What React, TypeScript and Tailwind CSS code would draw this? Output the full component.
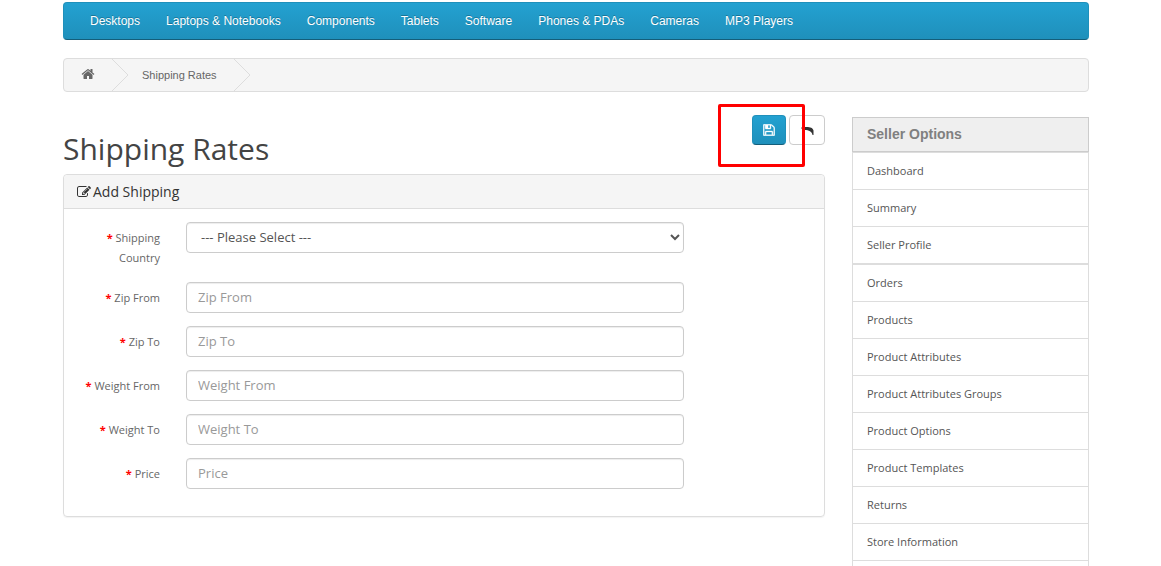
const MENU = [
  "Desktops",
  "Laptops & Notebooks",
  "Components",
  "Tablets",
  "Software",
  "Phones & PDAs",
  "Cameras",
  "MP3 Players",
];

const FIELDS = [
  { id: "zip-from", label: "Zip From" },
  { id: "zip-to", label: "Zip To" },
  { id: "weight-from", label: "Weight From" },
  { id: "weight-to", label: "Weight To" },
  { id: "price", label: "Price" },
];

const SELLER_LINKS = [
  ["Dashboard", "Summary", "Seller Profile"],
  [
    "Orders",
    "Products",
    "Product Attributes",
    "Product Attributes Groups",
    "Product Options",
    "Product Templates",
    "Returns",
    "Store Information",
  ],
];

const CONTROL =
  "block h-[31px] w-full rounded border border-[#ccc] bg-white pb-0.5 text-[13px] text-[#555] shadow-[inset_0_1px_1px_rgba(0,0,0,0.075)] outline-none focus:border-[#66afe9]";

/** House icon of the first breadcrumb entry. */
function HomeIcon() {
  return (
    <svg viewBox="0 0 1792 1792" className="size-[14px]" fill="currentColor" aria-hidden="true">
      <path d="M1472 992v480q0 26-19 45t-45 19h-384v-384h-256v384h-384q-26 0-45-19t-19-45v-480q0-1 .5-3t.5-3l575-474 575 474q1 2 1 6zm223-69l-62 74q-8 9-21 11h-3q-13 0-21-7l-692-577-692 577q-12 8-24 7-13-2-21-11l-62-74q-8-10-7-23.500t11-21.500l719-599q32-26 76-26t76 26l244 204v-195q0-14 9-23t23-9h192q14 0 23 9t9 23v408l219 182q10 8 11 21.500t-7 23.500z" />
    </svg>
  );
}

/** Pencil over a square, in the panel heading. */
function EditIcon() {
  return (
    <svg viewBox="0 0 1792 1792" className="size-[14px]" fill="currentColor" aria-hidden="true">
      <path d="M888 1184l116-116-152-152-116 116v56h96v96h56zm440-720q-16-16-33 1l-350 350q-17 17-1 33t33-1l350-350q17-17 1-33zm80 594v190q0 119-84.500 203.500t-203.500 84.500h-832q-119 0-203.500-84.500t-84.500-203.500v-832q0-119 84.500-203.500t203.500-84.500h832q63 0 117 25 15 7 18 23 3 17-9 29l-49 49q-14 14-32 8-23-6-45-6h-832q-66 0-113 47t-47 113v832q0 66 47 113t113 47h832q66 0 113-47t47-113v-126q0-13 9-22l64-64q15-15 35-7t20 29zm-96-738l288 288-672 672h-288v-288zm444 132l-92 92-288-288 92-92q28-28 68-28t68 28l152 152q28 28 28 68t-28 68z" />
    </svg>
  );
}

/** Floppy disk icon of the save button. */
function SaveIcon() {
  return (
    <svg
      viewBox="-30 -30 1596 1596"
      className="size-3"
      fill="currentColor"
      stroke="currentColor"
      strokeWidth="50"
      aria-hidden="true"
    >
      <path d="M384 1408h768v-384H384v384zm896 0h128V512q0-14-10-38.500t-20-34.500l-281-281q-10-10-34-20t-39-10v416q0 40-28 68t-68 28H352q-40 0-68-28t-28-68V128H128v1280h128V992q0-40 28-68t68-28h832q40 0 68 28t28 68v416zM896 480V160q0-13-9.500-22.500T864 128H672q-13 0-22.500 9.500T640 160v320q0 13 9.500 22.500T672 512h192q13 0 22.500-9.500T896 480zm640 32v928q0 40-28 68t-68 28H96q-40 0-68-28t-28-68V96q0-40 28-68T96 0h928q40 0 88 20t76 48l280 280q28 28 48 76t20 88z" />
    </svg>
  );
}

/** Curved arrow of the back button. */
function BackIcon() {
  return (
    <svg viewBox="0 0 14 12" className="h-3 w-3.5" fill="#333" aria-hidden="true">
      <path d="M1 4 4.500 1.500V3C9 2.500 13 3.500 13.500 6.500V11H12.500C12 7.500 9 6 4.500 6v1z" />
    </svg>
  );
}

/** Chevron line between two breadcrumb entries. */
function Separator() {
  return (
    <svg viewBox="0 0 17 32" className="h-8 w-[17px]" fill="none" stroke="#ddd" aria-hidden="true">
      <path d="M0 0 16 16 0 32" />
    </svg>
  );
}

function RequiredLabel({ htmlFor, text }: { htmlFor: string; text: string }) {
  return (
    <label
      htmlFor={htmlFor}
      className="w-24 shrink-0 pt-1.5 text-right text-[11px] leading-5 text-[#666]"
    >
      <span className="font-bold text-[#f00]">* </span>
      {text}
    </label>
  );
}

export default function App() {
  return (
    <div className="h-screen overflow-hidden bg-white pt-0.5 pr-[72px] pl-[63px] font-['Open_Sans',sans-serif] text-[#666]">
      <nav className="rounded border border-[#1f90bb] border-b-[#145e7a] bg-linear-to-b from-[#23a1d1] to-[#1f90bb] px-[13px] font-['Liberation_Sans',Arial,sans-serif]">
        <ul className="flex">
          {MENU.map((item) => (
            <li key={item}>
              <a
                href="#"
                className="block px-[13px] py-2 text-xs leading-5 text-white [text-shadow:0_-1px_0_rgba(0,0,0,0.25)]"
              >
                {item}
              </a>
            </li>
          ))}
        </ul>
      </nav>

      <ol className="mt-[18px] flex items-center rounded border border-[#ddd] bg-[#f5f5f5] font-['Liberation_Sans',Arial,sans-serif] text-[11px]">
        <li className="flex items-center">
          <a href="#" aria-label="Home" className="px-[17px] pb-0.5">
            <HomeIcon />
          </a>
          <Separator />
        </li>
        <li className="flex items-center">
          <a href="#" className="pr-[17px] pl-[13px]">
            Shipping Rates
          </a>
          <Separator />
        </li>
      </ol>

      <div className="flex gap-[27px]">
        <main className="min-w-0 flex-1">
          <div className="flex h-[82px] items-start justify-between">
            <h1 className="pt-9 text-[30px] leading-[42px] text-[#444]">Shipping Rates</h1>
            <div className="relative flex gap-[3px] pt-[23px]">
              <button
                type="submit"
                form="shipping-form"
                aria-label="Save"
                className="flex h-[30px] w-[34px] items-center justify-center rounded border border-[#1f90bb] border-b-[#145e7a] bg-linear-to-b from-[#23a1d1] to-[#1f90bb] text-white"
              >
                <SaveIcon />
              </button>
              <button
                type="button"
                aria-label="Back"
                className="flex h-[30px] w-9 items-center justify-center rounded border border-[#ccc] bg-white"
              >
                <BackIcon />
              </button>
              {/* Highlight around the save button */}
              <div className="pointer-events-none absolute top-3 right-5 h-[63px] w-[87px] rounded-xs border-3 border-[#f00]" />
            </div>
          </div>

          <section className="rounded border border-[#ddd] shadow-[0_1px_1px_rgba(0,0,0,0.05)]">
            <h2 className="flex items-center gap-0.5 rounded-t border-b border-[#ddd] bg-[#f5f5f5] px-[13px] py-1.5 text-sm leading-[21px] text-[#333]">
              <EditIcon />
              Add Shipping
            </h2>
            <form
              id="shipping-form"
              className="flex flex-col gap-[13px] pt-[13px] pr-[140px] pb-[27px]"
              onSubmit={(event) => event.preventDefault()}
            >
              <div className="flex gap-[26px] pb-px">
                <RequiredLabel htmlFor="country" text="Shipping Country" />
                <select id="country" defaultValue="" className={`${CONTROL} pr-[11px] pl-2.5`}>
                  <option value="">--- Please Select ---</option>
                </select>
              </div>
              {FIELDS.map((field) => (
                <div key={field.id} className="flex gap-[26px]">
                  <RequiredLabel htmlFor={field.id} text={field.label} />
                  <input
                    id={field.id}
                    type="text"
                    placeholder={field.label}
                    className={`${CONTROL} px-[11px] placeholder:text-[#999]`}
                  />
                </div>
              ))}
            </form>
          </section>
        </main>

        <aside className="flex w-[237px] shrink-0 flex-col pt-[25px]">
          <h3 className="border border-[#ccc] bg-[#efefef] px-3.5 py-1.5 font-['Liberation_Sans',Arial,sans-serif] text-sm leading-[21px] font-bold text-[#808080]">
            Seller Options
          </h3>
          {SELLER_LINKS.map((group) => (
            <ul key={group[0]} className="border-x border-t border-[#ddd] last:pb-9">
              {group.map((item) => (
                <li key={item} className="border-b border-[#ddd]">
                  <a href="#" className="block px-3.5 py-2 text-[11px] leading-5 text-[#555]">
                    {item}
                  </a>
                </li>
              ))}
            </ul>
          ))}
        </aside>
      </div>
    </div>
  );
}
